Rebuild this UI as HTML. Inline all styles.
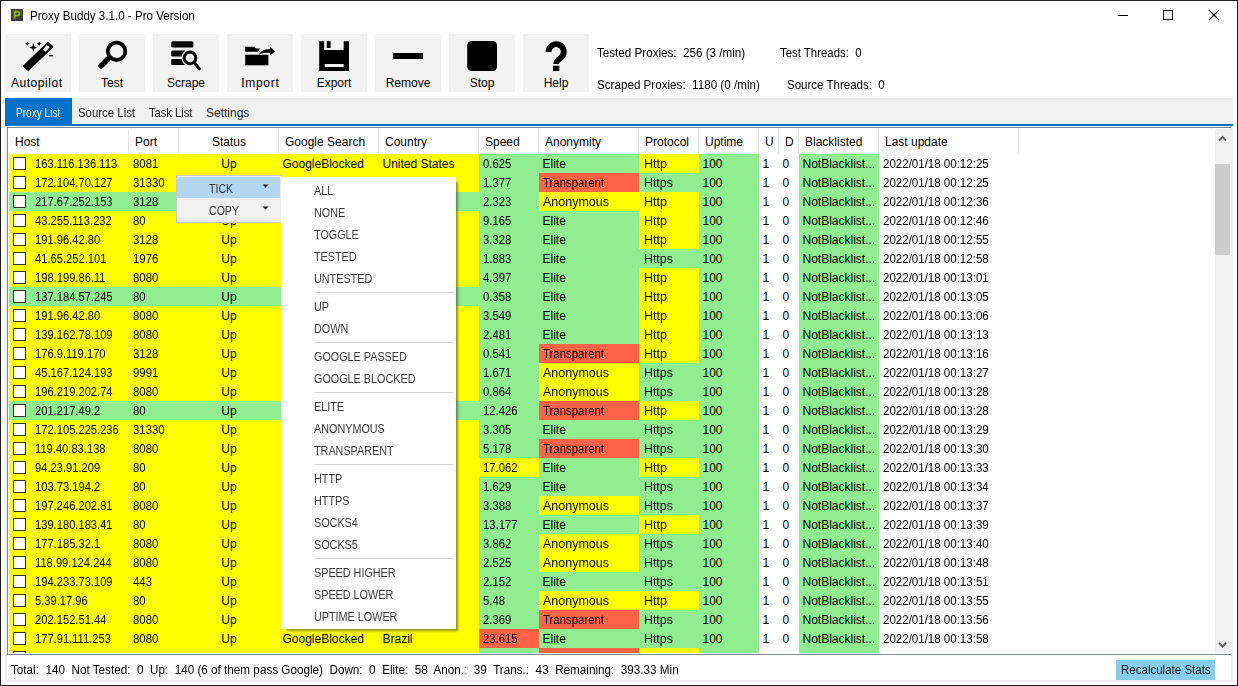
<!DOCTYPE html>
<html><head><meta charset="utf-8"><style>
*{margin:0;padding:0;box-sizing:border-box}
html,body{width:1238px;height:686px;overflow:hidden;background:#fff}
body{position:relative;font-family:"Liberation Sans",sans-serif;font-size:12px;color:#000}
.a{position:absolute}
.t{position:absolute;white-space:pre;line-height:1;transform-origin:0 0}
.c{position:absolute;height:19px;overflow:hidden}
.btn{position:absolute;top:34px;width:66px;height:58px;background:#f2f2f2}
.bl{position:absolute;left:0;width:66px;top:43px;text-align:center;font-size:12px;white-space:pre;line-height:1}
.hs{position:absolute;top:129px;width:1px;height:25px;background:#e5e5e5}
.ht{position:absolute;top:136px;white-space:pre;line-height:1}
.cb{position:absolute;left:13px;width:13px;height:13px;border:1px solid #333;background:#fff}
.mi{position:absolute;left:33px;white-space:pre;line-height:1;color:#3a3a3a;font-size:12px;transform:scaleX(0.9);transform-origin:0 0}
.ms{position:absolute;left:34px;width:139px;height:1px;background:#d7d7d7}
</style></head><body>

<div class="a" style="left:0;top:0;width:1238px;height:686px;border:1px solid #1f1f1f"></div>
<div class="a" style="left:11px;top:9px;width:12px;height:12px;background:#404040;border-radius:1px;box-shadow:0 0 1px #404040"></div>
<svg class="a" style="left:11px;top:9px" width="12" height="12"><path d="M3.7 9.8 V2.6 H6.3 Q8.5 2.6 8.5 4.6 Q8.5 6.6 6.3 6.6 H3.7" fill="none" stroke="#8fba0c" stroke-width="1.8"/></svg>
<div class="t" style="left:30px;top:10px;font-size:12px;transform:scaleX(0.965)">Proxy Buddy 3.1.0 - Pro Version</div>
<div class="a" style="left:1118px;top:15px;width:10px;height:1px;background:#000"></div>
<div class="a" style="left:1163px;top:10px;width:10px;height:10px;border:1px solid #000"></div>
<svg class="a" style="left:1208px;top:9px" width="12" height="12" viewBox="0 0 12 12"><path d="M1 1L11 11M11 1L1 11" stroke="#000" stroke-width="1.1"/></svg>
<div class="btn" style="left:5px"><svg class="a" style="left:0;top:0" width="66" height="58" viewBox="0 0 66 58"><path d="M43 8 L48.2 12.7 L23.2 36.8 L18.2 32.1 Z" fill="#000" stroke="#000" stroke-width="1" stroke-linejoin="round"/><path d="M38 15.6 L41.8 11 L44.8 13.5 L40.6 17.75 Z" fill="#f2f2f2"/><path d="M28.3 8.8 L29.3 12.4 L32.6 13.4 L29.3 14.4 L28.3 18.0 L27.3 14.4 L24.0 13.4 L27.3 12.4 Z" fill="#000"/><path d="M22.4 7.500000000000001 L23.2 9.0 L24.7 9.8 L23.2 10.600000000000001 L22.4 12.100000000000001 L21.599999999999998 10.600000000000001 L20.099999999999998 9.8 L21.599999999999998 9.0 Z" fill="#000"/><path d="M34.2 7.500000000000001 L35.0 9.0 L36.5 9.8 L35.0 10.600000000000001 L34.2 12.100000000000001 L33.400000000000006 10.600000000000001 L31.900000000000002 9.8 L33.400000000000006 9.0 Z" fill="#000"/><rect x="44" y="21" width="4.2" height="1.3" fill="#000"/></svg><div class="bl" style="letter-spacing:0.55px;text-indent:-2.5px">Autopilot</div></div>
<div class="btn" style="left:79px"><svg class="a" style="left:0;top:0" width="66" height="58" viewBox="0 0 66 58"><circle cx="37.6" cy="17.3" r="8.7" fill="none" stroke="#000" stroke-width="3.8"/><path d="M22 32 L29 25" stroke="#000" stroke-width="5.4" stroke-linecap="round"/></svg><div class="bl" style="">Test</div></div>
<div class="btn" style="left:153px"><svg class="a" style="left:0;top:0" width="66" height="58" viewBox="0 0 66 58"><rect x="18.2" y="7.2" width="22.2" height="6.3" rx="1.5" fill="#000"/><rect x="18.2" y="16.5" width="14" height="5.9" rx="1.2" fill="#000"/><rect x="18.2" y="24.9" width="14" height="6" rx="1.2" fill="#000"/><circle cx="37" cy="23.9" r="8.6" fill="#f2f2f2"/><circle cx="37" cy="23.9" r="5.8" fill="none" stroke="#000" stroke-width="3"/><path d="M41.5 28.8 L46.3 34.9" stroke="#000" stroke-width="3" stroke-linecap="round"/></svg><div class="bl" style="">Scrape</div></div>
<div class="btn" style="left:227px"><svg class="a" style="left:0;top:0" width="66" height="58" viewBox="0 0 66 58"><path d="M18.2 12.7 L27.5 12.7 L29 14.5 L33 14.5 L31 17.75 L18.2 17.75 Z" fill="#000"/><path d="M18.2 20.7 L41.4 20.7 L41.4 31.3 L18.2 31.3 Z" fill="#000"/><path d="M32 20.5 C34 16.5 38 15 43 15.3 L43 12.7 L48.2 17.3 L43 21.5 L43 19 C38 18.5 35 19 33 20.5 Z" fill="#000"/></svg><div class="bl" style="letter-spacing:0.7px;text-indent:0.7px">Import</div></div>
<div class="btn" style="left:301px"><svg class="a" style="left:0;top:0" width="66" height="58" viewBox="0 0 66 58"><path d="M18.2 7.2 H48 V37 H18.2 Z M23.2 7.2 V16.1 H42.7 V7.2 Z" fill="#000" fill-rule="evenodd"/><rect x="25.8" y="7.2" width="3.8" height="6.8" fill="#000"/><rect x="23.7" y="30" width="19" height="3" fill="#f2f2f2"/></svg><div class="bl" style="">Export</div></div>
<div class="btn" style="left:375px"><svg class="a" style="left:0;top:0" width="66" height="58" viewBox="0 0 66 58"><rect x="18.2" y="19" width="29.8" height="6" fill="#000"/></svg><div class="bl" style="">Remove</div></div>
<div class="btn" style="left:449px"><svg class="a" style="left:0;top:0" width="66" height="58" viewBox="0 0 66 58"><rect x="18.2" y="7" width="29.8" height="30" rx="4.5" fill="#000"/></svg><div class="bl" style="">Stop</div></div>
<div class="btn" style="left:523px"><svg class="a" style="left:0;top:0" width="66" height="58" viewBox="0 0 66 58"><path d="M25.6 18 A7.6 7.6 0 1 1 38.5 23.2 L35.2 26 Q33.2 27.5 33.2 29.5 L33.2 30" fill="none" stroke="#000" stroke-width="5.8"/><rect x="30" y="31.7" width="6.3" height="5.3" fill="#000"/></svg><div class="bl" style="">Help</div></div>
<div class="t" style="left:597px;top:47px;transform:scaleX(0.97)">Tested Proxies:  256 (3 /min)</div>
<div class="t" style="left:780px;top:47px;transform:scaleX(0.95)">Test Threads:  0</div>
<div class="t" style="left:597px;top:79px;transform:scaleX(0.97)">Scraped Proxies:  1180 (0 /min)</div>
<div class="t" style="left:787px;top:79px;transform:scaleX(0.96)">Source Threads:  0</div>
<div class="a" style="left:5px;top:98px;width:1228px;height:26px;background:#f0f0f0"></div>
<div class="a" style="left:5px;top:124px;width:1228px;height:2px;background:#0072c9"></div>
<div class="a" style="left:5px;top:98px;width:67px;height:28px;background:#0072c9"></div>
<div class="t" style="left:16px;top:107px;color:#fff;transform:scaleX(0.84)">Proxy List</div>
<div class="t" style="left:78px;top:107px;color:#222;transform:scaleX(0.95)">Source List</div>
<div class="t" style="left:149px;top:107px;color:#222;transform:scaleX(0.93)">Task List</div>
<div class="t" style="left:206px;top:107px;color:#222">Settings</div>
<div class="a" style="left:5px;top:126px;width:1228px;height:556px;border:2px solid #f0f0f0;border-top:none"></div>
<div class="a" style="left:7px;top:127px;width:1225px;height:528px;border:1px solid #828790;border-right:none;clip-path:inset(0 1px 0 0);background:#fff"></div>
<div class="ht" style="left:15px">Host</div>
<div class="hs" style="left:128px"></div>
<div class="ht" style="left:135px">Port</div>
<div class="hs" style="left:178px"></div>
<div class="ht" style="left:179px;width:100px;text-align:center">Status</div>
<div class="hs" style="left:278px"></div>
<div class="ht" style="left:285px">Google Search</div>
<div class="hs" style="left:378px"></div>
<div class="ht" style="left:385px">Country</div>
<div class="hs" style="left:478px"></div>
<div class="ht" style="left:485px">Speed</div>
<div class="hs" style="left:538px"></div>
<div class="ht" style="left:545px">Anonymity</div>
<div class="hs" style="left:638px"></div>
<div class="ht" style="left:645px">Protocol</div>
<div class="hs" style="left:698px"></div>
<div class="ht" style="left:705px">Uptime</div>
<div class="hs" style="left:758px"></div>
<div class="ht" style="left:765px">U</div>
<div class="hs" style="left:778px"></div>
<div class="ht" style="left:785px">D</div>
<div class="hs" style="left:798px"></div>
<div class="ht" style="left:805px">Blacklisted</div>
<div class="hs" style="left:878px"></div>
<div class="ht" style="left:885px">Last update</div>
<div class="hs" style="left:1018px"></div>
<div class="a" style="left:8px;top:154px;width:1207px;height:499px;overflow:hidden">
<div class="c" style="left:1px;top:0px;width:120px;background:#ffff00"></div>
<div class="c" style="left:121px;top:0px;width:50px;background:#ffff00"></div>
<div class="c" style="left:171px;top:0px;width:100px;background:#ffff00"></div>
<div class="c" style="left:271px;top:0px;width:100px;background:#ffff00"></div>
<div class="c" style="left:371px;top:0px;width:100px;background:#ffff00"></div>
<div class="c" style="left:471px;top:0px;width:60px;background:#90ee90"></div>
<div class="c" style="left:531px;top:0px;width:100px;background:#90ee90"></div>
<div class="c" style="left:631px;top:0px;width:60px;background:#ffff00"></div>
<div class="c" style="left:691px;top:0px;width:60px;background:#90ee90"></div>
<div class="c" style="left:751px;top:0px;width:20px;background:#ffffff"></div>
<div class="c" style="left:771px;top:0px;width:20px;background:#ffffff"></div>
<div class="c" style="left:791px;top:0px;width:80px;background:#90ee90"></div>
<div class="c" style="left:871px;top:0px;width:140px;background:#ffffff"></div>
<div class="cb" style="left:5px;top:3px"></div>
<div class="t" style="left:27px;top:4px;transform:scaleX(0.93)">163.116.136.113</div>
<div class="t" style="left:124.5px;top:4px;transform:scaleX(0.95)">8081</div>
<div class="t" style="left:171px;width:100px;text-align:center;top:4px">Up</div>
<div class="t" style="left:274.5px;top:4px">GoogleBlocked</div>
<div class="t" style="left:374.5px;top:4px">United States</div>
<div class="t" style="left:474.5px;top:4px;transform:scaleX(0.94)">0.625</div>
<div class="t" style="left:534.5px;top:4px">Elite</div>
<div class="t" style="left:635.5px;top:4px;transform:scaleX(1.05)">Http</div>
<div class="t" style="left:694.5px;top:4px">100</div>
<div class="t" style="left:754.5px;top:4px">1</div>
<div class="t" style="left:774.5px;top:4px">0</div>
<div class="t" style="left:794.5px;top:4px">NotBlacklist...</div>
<div class="t" style="left:874.5px;top:4px;transform:scaleX(0.96)">2022/01/18 00:12:25</div>
<div class="c" style="left:1px;top:19px;width:120px;background:#ffff00"></div>
<div class="c" style="left:121px;top:19px;width:50px;background:#ffff00"></div>
<div class="c" style="left:171px;top:19px;width:100px;background:#ffff00"></div>
<div class="c" style="left:271px;top:19px;width:100px;background:#ffff00"></div>
<div class="c" style="left:371px;top:19px;width:100px;background:#ffff00"></div>
<div class="c" style="left:471px;top:19px;width:60px;background:#90ee90"></div>
<div class="c" style="left:531px;top:19px;width:100px;background:#ff6347"></div>
<div class="c" style="left:631px;top:19px;width:60px;background:#90ee90"></div>
<div class="c" style="left:691px;top:19px;width:60px;background:#90ee90"></div>
<div class="c" style="left:751px;top:19px;width:20px;background:#ffffff"></div>
<div class="c" style="left:771px;top:19px;width:20px;background:#ffffff"></div>
<div class="c" style="left:791px;top:19px;width:80px;background:#90ee90"></div>
<div class="c" style="left:871px;top:19px;width:140px;background:#ffffff"></div>
<div class="cb" style="left:5px;top:22px"></div>
<div class="t" style="left:27px;top:23px;transform:scaleX(0.93)">172.104.70.127</div>
<div class="t" style="left:124.5px;top:23px;transform:scaleX(0.95)">31330</div>
<div class="t" style="left:171px;width:100px;text-align:center;top:23px">Up</div>
<div class="t" style="left:274.5px;top:23px">GoogleBlocked</div>
<div class="t" style="left:374.5px;top:23px">United States</div>
<div class="t" style="left:474.5px;top:23px;transform:scaleX(0.94)">1.377</div>
<div class="t" style="left:534.5px;top:23px;transform:scaleX(0.95)">Transparent</div>
<div class="t" style="left:635.5px;top:23px;transform:scaleX(1.03)">Https</div>
<div class="t" style="left:694.5px;top:23px">100</div>
<div class="t" style="left:754.5px;top:23px">1</div>
<div class="t" style="left:774.5px;top:23px">0</div>
<div class="t" style="left:794.5px;top:23px">NotBlacklist...</div>
<div class="t" style="left:874.5px;top:23px;transform:scaleX(0.96)">2022/01/18 00:12:25</div>
<div class="c" style="left:1px;top:38px;width:120px;background:#90ee90"></div>
<div class="c" style="left:121px;top:38px;width:50px;background:#90ee90"></div>
<div class="c" style="left:171px;top:38px;width:100px;background:#90ee90"></div>
<div class="c" style="left:271px;top:38px;width:100px;background:#90ee90"></div>
<div class="c" style="left:371px;top:38px;width:100px;background:#90ee90"></div>
<div class="c" style="left:471px;top:38px;width:60px;background:#90ee90"></div>
<div class="c" style="left:531px;top:38px;width:100px;background:#ffff00"></div>
<div class="c" style="left:631px;top:38px;width:60px;background:#ffff00"></div>
<div class="c" style="left:691px;top:38px;width:60px;background:#90ee90"></div>
<div class="c" style="left:751px;top:38px;width:20px;background:#ffffff"></div>
<div class="c" style="left:771px;top:38px;width:20px;background:#ffffff"></div>
<div class="c" style="left:791px;top:38px;width:80px;background:#90ee90"></div>
<div class="c" style="left:871px;top:38px;width:140px;background:#ffffff"></div>
<div class="cb" style="left:5px;top:41px"></div>
<div class="t" style="left:27px;top:42px;transform:scaleX(0.93)">217.67.252.153</div>
<div class="t" style="left:124.5px;top:42px;transform:scaleX(0.95)">3128</div>
<div class="t" style="left:171px;width:100px;text-align:center;top:42px">Up</div>
<div class="t" style="left:274.5px;top:42px">GooglePassed</div>
<div class="t" style="left:374.5px;top:42px">Germany</div>
<div class="t" style="left:474.5px;top:42px;transform:scaleX(0.94)">2.323</div>
<div class="t" style="left:534.5px;top:42px;transform:scaleX(1.04)">Anonymous</div>
<div class="t" style="left:635.5px;top:42px;transform:scaleX(1.05)">Http</div>
<div class="t" style="left:694.5px;top:42px">100</div>
<div class="t" style="left:754.5px;top:42px">1</div>
<div class="t" style="left:774.5px;top:42px">0</div>
<div class="t" style="left:794.5px;top:42px">NotBlacklist...</div>
<div class="t" style="left:874.5px;top:42px;transform:scaleX(0.96)">2022/01/18 00:12:36</div>
<div class="c" style="left:1px;top:57px;width:120px;background:#ffff00"></div>
<div class="c" style="left:121px;top:57px;width:50px;background:#ffff00"></div>
<div class="c" style="left:171px;top:57px;width:100px;background:#ffff00"></div>
<div class="c" style="left:271px;top:57px;width:100px;background:#ffff00"></div>
<div class="c" style="left:371px;top:57px;width:100px;background:#ffff00"></div>
<div class="c" style="left:471px;top:57px;width:60px;background:#90ee90"></div>
<div class="c" style="left:531px;top:57px;width:100px;background:#90ee90"></div>
<div class="c" style="left:631px;top:57px;width:60px;background:#ffff00"></div>
<div class="c" style="left:691px;top:57px;width:60px;background:#90ee90"></div>
<div class="c" style="left:751px;top:57px;width:20px;background:#ffffff"></div>
<div class="c" style="left:771px;top:57px;width:20px;background:#ffffff"></div>
<div class="c" style="left:791px;top:57px;width:80px;background:#90ee90"></div>
<div class="c" style="left:871px;top:57px;width:140px;background:#ffffff"></div>
<div class="cb" style="left:5px;top:60px"></div>
<div class="t" style="left:27px;top:61px;transform:scaleX(0.93)">43.255.113.232</div>
<div class="t" style="left:124.5px;top:61px;transform:scaleX(0.95)">80</div>
<div class="t" style="left:171px;width:100px;text-align:center;top:61px">Up</div>
<div class="t" style="left:274.5px;top:61px">GoogleBlocked</div>
<div class="t" style="left:374.5px;top:61px">India</div>
<div class="t" style="left:474.5px;top:61px;transform:scaleX(0.94)">9.165</div>
<div class="t" style="left:534.5px;top:61px">Elite</div>
<div class="t" style="left:635.5px;top:61px;transform:scaleX(1.05)">Http</div>
<div class="t" style="left:694.5px;top:61px">100</div>
<div class="t" style="left:754.5px;top:61px">1</div>
<div class="t" style="left:774.5px;top:61px">0</div>
<div class="t" style="left:794.5px;top:61px">NotBlacklist...</div>
<div class="t" style="left:874.5px;top:61px;transform:scaleX(0.96)">2022/01/18 00:12:46</div>
<div class="c" style="left:1px;top:76px;width:120px;background:#ffff00"></div>
<div class="c" style="left:121px;top:76px;width:50px;background:#ffff00"></div>
<div class="c" style="left:171px;top:76px;width:100px;background:#ffff00"></div>
<div class="c" style="left:271px;top:76px;width:100px;background:#ffff00"></div>
<div class="c" style="left:371px;top:76px;width:100px;background:#ffff00"></div>
<div class="c" style="left:471px;top:76px;width:60px;background:#90ee90"></div>
<div class="c" style="left:531px;top:76px;width:100px;background:#90ee90"></div>
<div class="c" style="left:631px;top:76px;width:60px;background:#ffff00"></div>
<div class="c" style="left:691px;top:76px;width:60px;background:#90ee90"></div>
<div class="c" style="left:751px;top:76px;width:20px;background:#ffffff"></div>
<div class="c" style="left:771px;top:76px;width:20px;background:#ffffff"></div>
<div class="c" style="left:791px;top:76px;width:80px;background:#90ee90"></div>
<div class="c" style="left:871px;top:76px;width:140px;background:#ffffff"></div>
<div class="cb" style="left:5px;top:79px"></div>
<div class="t" style="left:27px;top:80px;transform:scaleX(0.93)">191.96.42.80</div>
<div class="t" style="left:124.5px;top:80px;transform:scaleX(0.95)">3128</div>
<div class="t" style="left:171px;width:100px;text-align:center;top:80px">Up</div>
<div class="t" style="left:274.5px;top:80px">GoogleBlocked</div>
<div class="t" style="left:374.5px;top:80px">United States</div>
<div class="t" style="left:474.5px;top:80px;transform:scaleX(0.94)">3.328</div>
<div class="t" style="left:534.5px;top:80px">Elite</div>
<div class="t" style="left:635.5px;top:80px;transform:scaleX(1.05)">Http</div>
<div class="t" style="left:694.5px;top:80px">100</div>
<div class="t" style="left:754.5px;top:80px">1</div>
<div class="t" style="left:774.5px;top:80px">0</div>
<div class="t" style="left:794.5px;top:80px">NotBlacklist...</div>
<div class="t" style="left:874.5px;top:80px;transform:scaleX(0.96)">2022/01/18 00:12:55</div>
<div class="c" style="left:1px;top:95px;width:120px;background:#ffff00"></div>
<div class="c" style="left:121px;top:95px;width:50px;background:#ffff00"></div>
<div class="c" style="left:171px;top:95px;width:100px;background:#ffff00"></div>
<div class="c" style="left:271px;top:95px;width:100px;background:#ffff00"></div>
<div class="c" style="left:371px;top:95px;width:100px;background:#ffff00"></div>
<div class="c" style="left:471px;top:95px;width:60px;background:#90ee90"></div>
<div class="c" style="left:531px;top:95px;width:100px;background:#90ee90"></div>
<div class="c" style="left:631px;top:95px;width:60px;background:#90ee90"></div>
<div class="c" style="left:691px;top:95px;width:60px;background:#90ee90"></div>
<div class="c" style="left:751px;top:95px;width:20px;background:#ffffff"></div>
<div class="c" style="left:771px;top:95px;width:20px;background:#ffffff"></div>
<div class="c" style="left:791px;top:95px;width:80px;background:#90ee90"></div>
<div class="c" style="left:871px;top:95px;width:140px;background:#ffffff"></div>
<div class="cb" style="left:5px;top:98px"></div>
<div class="t" style="left:27px;top:99px;transform:scaleX(0.93)">41.65.252.101</div>
<div class="t" style="left:124.5px;top:99px;transform:scaleX(0.95)">1976</div>
<div class="t" style="left:171px;width:100px;text-align:center;top:99px">Up</div>
<div class="t" style="left:274.5px;top:99px">GoogleBlocked</div>
<div class="t" style="left:374.5px;top:99px">Egypt</div>
<div class="t" style="left:474.5px;top:99px;transform:scaleX(0.94)">1.883</div>
<div class="t" style="left:534.5px;top:99px">Elite</div>
<div class="t" style="left:635.5px;top:99px;transform:scaleX(1.03)">Https</div>
<div class="t" style="left:694.5px;top:99px">100</div>
<div class="t" style="left:754.5px;top:99px">1</div>
<div class="t" style="left:774.5px;top:99px">0</div>
<div class="t" style="left:794.5px;top:99px">NotBlacklist...</div>
<div class="t" style="left:874.5px;top:99px;transform:scaleX(0.96)">2022/01/18 00:12:58</div>
<div class="c" style="left:1px;top:114px;width:120px;background:#ffff00"></div>
<div class="c" style="left:121px;top:114px;width:50px;background:#ffff00"></div>
<div class="c" style="left:171px;top:114px;width:100px;background:#ffff00"></div>
<div class="c" style="left:271px;top:114px;width:100px;background:#ffff00"></div>
<div class="c" style="left:371px;top:114px;width:100px;background:#ffff00"></div>
<div class="c" style="left:471px;top:114px;width:60px;background:#90ee90"></div>
<div class="c" style="left:531px;top:114px;width:100px;background:#90ee90"></div>
<div class="c" style="left:631px;top:114px;width:60px;background:#ffff00"></div>
<div class="c" style="left:691px;top:114px;width:60px;background:#90ee90"></div>
<div class="c" style="left:751px;top:114px;width:20px;background:#ffffff"></div>
<div class="c" style="left:771px;top:114px;width:20px;background:#ffffff"></div>
<div class="c" style="left:791px;top:114px;width:80px;background:#90ee90"></div>
<div class="c" style="left:871px;top:114px;width:140px;background:#ffffff"></div>
<div class="cb" style="left:5px;top:117px"></div>
<div class="t" style="left:27px;top:118px;transform:scaleX(0.93)">198.199.86.11</div>
<div class="t" style="left:124.5px;top:118px;transform:scaleX(0.95)">8080</div>
<div class="t" style="left:171px;width:100px;text-align:center;top:118px">Up</div>
<div class="t" style="left:274.5px;top:118px">GoogleBlocked</div>
<div class="t" style="left:374.5px;top:118px">United States</div>
<div class="t" style="left:474.5px;top:118px;transform:scaleX(0.94)">4.397</div>
<div class="t" style="left:534.5px;top:118px">Elite</div>
<div class="t" style="left:635.5px;top:118px;transform:scaleX(1.05)">Http</div>
<div class="t" style="left:694.5px;top:118px">100</div>
<div class="t" style="left:754.5px;top:118px">1</div>
<div class="t" style="left:774.5px;top:118px">0</div>
<div class="t" style="left:794.5px;top:118px">NotBlacklist...</div>
<div class="t" style="left:874.5px;top:118px;transform:scaleX(0.96)">2022/01/18 00:13:01</div>
<div class="c" style="left:1px;top:133px;width:120px;background:#90ee90"></div>
<div class="c" style="left:121px;top:133px;width:50px;background:#90ee90"></div>
<div class="c" style="left:171px;top:133px;width:100px;background:#90ee90"></div>
<div class="c" style="left:271px;top:133px;width:100px;background:#90ee90"></div>
<div class="c" style="left:371px;top:133px;width:100px;background:#90ee90"></div>
<div class="c" style="left:471px;top:133px;width:60px;background:#90ee90"></div>
<div class="c" style="left:531px;top:133px;width:100px;background:#90ee90"></div>
<div class="c" style="left:631px;top:133px;width:60px;background:#ffff00"></div>
<div class="c" style="left:691px;top:133px;width:60px;background:#90ee90"></div>
<div class="c" style="left:751px;top:133px;width:20px;background:#ffffff"></div>
<div class="c" style="left:771px;top:133px;width:20px;background:#ffffff"></div>
<div class="c" style="left:791px;top:133px;width:80px;background:#90ee90"></div>
<div class="c" style="left:871px;top:133px;width:140px;background:#ffffff"></div>
<div class="cb" style="left:5px;top:136px"></div>
<div class="t" style="left:27px;top:137px;transform:scaleX(0.93)">137.184.57.245</div>
<div class="t" style="left:124.5px;top:137px;transform:scaleX(0.95)">80</div>
<div class="t" style="left:171px;width:100px;text-align:center;top:137px">Up</div>
<div class="t" style="left:274.5px;top:137px">GooglePassed</div>
<div class="t" style="left:374.5px;top:137px">United States</div>
<div class="t" style="left:474.5px;top:137px;transform:scaleX(0.94)">0.358</div>
<div class="t" style="left:534.5px;top:137px">Elite</div>
<div class="t" style="left:635.5px;top:137px;transform:scaleX(1.05)">Http</div>
<div class="t" style="left:694.5px;top:137px">100</div>
<div class="t" style="left:754.5px;top:137px">1</div>
<div class="t" style="left:774.5px;top:137px">0</div>
<div class="t" style="left:794.5px;top:137px">NotBlacklist...</div>
<div class="t" style="left:874.5px;top:137px;transform:scaleX(0.96)">2022/01/18 00:13:05</div>
<div class="c" style="left:1px;top:152px;width:120px;background:#ffff00"></div>
<div class="c" style="left:121px;top:152px;width:50px;background:#ffff00"></div>
<div class="c" style="left:171px;top:152px;width:100px;background:#ffff00"></div>
<div class="c" style="left:271px;top:152px;width:100px;background:#ffff00"></div>
<div class="c" style="left:371px;top:152px;width:100px;background:#ffff00"></div>
<div class="c" style="left:471px;top:152px;width:60px;background:#90ee90"></div>
<div class="c" style="left:531px;top:152px;width:100px;background:#90ee90"></div>
<div class="c" style="left:631px;top:152px;width:60px;background:#ffff00"></div>
<div class="c" style="left:691px;top:152px;width:60px;background:#90ee90"></div>
<div class="c" style="left:751px;top:152px;width:20px;background:#ffffff"></div>
<div class="c" style="left:771px;top:152px;width:20px;background:#ffffff"></div>
<div class="c" style="left:791px;top:152px;width:80px;background:#90ee90"></div>
<div class="c" style="left:871px;top:152px;width:140px;background:#ffffff"></div>
<div class="cb" style="left:5px;top:155px"></div>
<div class="t" style="left:27px;top:156px;transform:scaleX(0.93)">191.96.42.80</div>
<div class="t" style="left:124.5px;top:156px;transform:scaleX(0.95)">8080</div>
<div class="t" style="left:171px;width:100px;text-align:center;top:156px">Up</div>
<div class="t" style="left:274.5px;top:156px">GoogleBlocked</div>
<div class="t" style="left:374.5px;top:156px">United States</div>
<div class="t" style="left:474.5px;top:156px;transform:scaleX(0.94)">3.549</div>
<div class="t" style="left:534.5px;top:156px">Elite</div>
<div class="t" style="left:635.5px;top:156px;transform:scaleX(1.05)">Http</div>
<div class="t" style="left:694.5px;top:156px">100</div>
<div class="t" style="left:754.5px;top:156px">1</div>
<div class="t" style="left:774.5px;top:156px">0</div>
<div class="t" style="left:794.5px;top:156px">NotBlacklist...</div>
<div class="t" style="left:874.5px;top:156px;transform:scaleX(0.96)">2022/01/18 00:13:06</div>
<div class="c" style="left:1px;top:171px;width:120px;background:#ffff00"></div>
<div class="c" style="left:121px;top:171px;width:50px;background:#ffff00"></div>
<div class="c" style="left:171px;top:171px;width:100px;background:#ffff00"></div>
<div class="c" style="left:271px;top:171px;width:100px;background:#ffff00"></div>
<div class="c" style="left:371px;top:171px;width:100px;background:#ffff00"></div>
<div class="c" style="left:471px;top:171px;width:60px;background:#90ee90"></div>
<div class="c" style="left:531px;top:171px;width:100px;background:#90ee90"></div>
<div class="c" style="left:631px;top:171px;width:60px;background:#ffff00"></div>
<div class="c" style="left:691px;top:171px;width:60px;background:#90ee90"></div>
<div class="c" style="left:751px;top:171px;width:20px;background:#ffffff"></div>
<div class="c" style="left:771px;top:171px;width:20px;background:#ffffff"></div>
<div class="c" style="left:791px;top:171px;width:80px;background:#90ee90"></div>
<div class="c" style="left:871px;top:171px;width:140px;background:#ffffff"></div>
<div class="cb" style="left:5px;top:174px"></div>
<div class="t" style="left:27px;top:175px;transform:scaleX(0.93)">139.162.78.109</div>
<div class="t" style="left:124.5px;top:175px;transform:scaleX(0.95)">8080</div>
<div class="t" style="left:171px;width:100px;text-align:center;top:175px">Up</div>
<div class="t" style="left:274.5px;top:175px">GoogleBlocked</div>
<div class="t" style="left:374.5px;top:175px">Japan</div>
<div class="t" style="left:474.5px;top:175px;transform:scaleX(0.94)">2.481</div>
<div class="t" style="left:534.5px;top:175px">Elite</div>
<div class="t" style="left:635.5px;top:175px;transform:scaleX(1.05)">Http</div>
<div class="t" style="left:694.5px;top:175px">100</div>
<div class="t" style="left:754.5px;top:175px">1</div>
<div class="t" style="left:774.5px;top:175px">0</div>
<div class="t" style="left:794.5px;top:175px">NotBlacklist...</div>
<div class="t" style="left:874.5px;top:175px;transform:scaleX(0.96)">2022/01/18 00:13:13</div>
<div class="c" style="left:1px;top:190px;width:120px;background:#ffff00"></div>
<div class="c" style="left:121px;top:190px;width:50px;background:#ffff00"></div>
<div class="c" style="left:171px;top:190px;width:100px;background:#ffff00"></div>
<div class="c" style="left:271px;top:190px;width:100px;background:#ffff00"></div>
<div class="c" style="left:371px;top:190px;width:100px;background:#ffff00"></div>
<div class="c" style="left:471px;top:190px;width:60px;background:#90ee90"></div>
<div class="c" style="left:531px;top:190px;width:100px;background:#ff6347"></div>
<div class="c" style="left:631px;top:190px;width:60px;background:#ffff00"></div>
<div class="c" style="left:691px;top:190px;width:60px;background:#90ee90"></div>
<div class="c" style="left:751px;top:190px;width:20px;background:#ffffff"></div>
<div class="c" style="left:771px;top:190px;width:20px;background:#ffffff"></div>
<div class="c" style="left:791px;top:190px;width:80px;background:#90ee90"></div>
<div class="c" style="left:871px;top:190px;width:140px;background:#ffffff"></div>
<div class="cb" style="left:5px;top:193px"></div>
<div class="t" style="left:27px;top:194px;transform:scaleX(0.93)">176.9.119.170</div>
<div class="t" style="left:124.5px;top:194px;transform:scaleX(0.95)">3128</div>
<div class="t" style="left:171px;width:100px;text-align:center;top:194px">Up</div>
<div class="t" style="left:274.5px;top:194px">GoogleBlocked</div>
<div class="t" style="left:374.5px;top:194px">Germany</div>
<div class="t" style="left:474.5px;top:194px;transform:scaleX(0.94)">0.541</div>
<div class="t" style="left:534.5px;top:194px;transform:scaleX(0.95)">Transparent</div>
<div class="t" style="left:635.5px;top:194px;transform:scaleX(1.05)">Http</div>
<div class="t" style="left:694.5px;top:194px">100</div>
<div class="t" style="left:754.5px;top:194px">1</div>
<div class="t" style="left:774.5px;top:194px">0</div>
<div class="t" style="left:794.5px;top:194px">NotBlacklist...</div>
<div class="t" style="left:874.5px;top:194px;transform:scaleX(0.96)">2022/01/18 00:13:16</div>
<div class="c" style="left:1px;top:209px;width:120px;background:#ffff00"></div>
<div class="c" style="left:121px;top:209px;width:50px;background:#ffff00"></div>
<div class="c" style="left:171px;top:209px;width:100px;background:#ffff00"></div>
<div class="c" style="left:271px;top:209px;width:100px;background:#ffff00"></div>
<div class="c" style="left:371px;top:209px;width:100px;background:#ffff00"></div>
<div class="c" style="left:471px;top:209px;width:60px;background:#90ee90"></div>
<div class="c" style="left:531px;top:209px;width:100px;background:#ffff00"></div>
<div class="c" style="left:631px;top:209px;width:60px;background:#90ee90"></div>
<div class="c" style="left:691px;top:209px;width:60px;background:#90ee90"></div>
<div class="c" style="left:751px;top:209px;width:20px;background:#ffffff"></div>
<div class="c" style="left:771px;top:209px;width:20px;background:#ffffff"></div>
<div class="c" style="left:791px;top:209px;width:80px;background:#90ee90"></div>
<div class="c" style="left:871px;top:209px;width:140px;background:#ffffff"></div>
<div class="cb" style="left:5px;top:212px"></div>
<div class="t" style="left:27px;top:213px;transform:scaleX(0.93)">45.167.124.193</div>
<div class="t" style="left:124.5px;top:213px;transform:scaleX(0.95)">9991</div>
<div class="t" style="left:171px;width:100px;text-align:center;top:213px">Up</div>
<div class="t" style="left:274.5px;top:213px">GoogleBlocked</div>
<div class="t" style="left:374.5px;top:213px">Brazil</div>
<div class="t" style="left:474.5px;top:213px;transform:scaleX(0.94)">1.671</div>
<div class="t" style="left:534.5px;top:213px;transform:scaleX(1.04)">Anonymous</div>
<div class="t" style="left:635.5px;top:213px;transform:scaleX(1.03)">Https</div>
<div class="t" style="left:694.5px;top:213px">100</div>
<div class="t" style="left:754.5px;top:213px">1</div>
<div class="t" style="left:774.5px;top:213px">0</div>
<div class="t" style="left:794.5px;top:213px">NotBlacklist...</div>
<div class="t" style="left:874.5px;top:213px;transform:scaleX(0.96)">2022/01/18 00:13:27</div>
<div class="c" style="left:1px;top:228px;width:120px;background:#ffff00"></div>
<div class="c" style="left:121px;top:228px;width:50px;background:#ffff00"></div>
<div class="c" style="left:171px;top:228px;width:100px;background:#ffff00"></div>
<div class="c" style="left:271px;top:228px;width:100px;background:#ffff00"></div>
<div class="c" style="left:371px;top:228px;width:100px;background:#ffff00"></div>
<div class="c" style="left:471px;top:228px;width:60px;background:#90ee90"></div>
<div class="c" style="left:531px;top:228px;width:100px;background:#ffff00"></div>
<div class="c" style="left:631px;top:228px;width:60px;background:#90ee90"></div>
<div class="c" style="left:691px;top:228px;width:60px;background:#90ee90"></div>
<div class="c" style="left:751px;top:228px;width:20px;background:#ffffff"></div>
<div class="c" style="left:771px;top:228px;width:20px;background:#ffffff"></div>
<div class="c" style="left:791px;top:228px;width:80px;background:#90ee90"></div>
<div class="c" style="left:871px;top:228px;width:140px;background:#ffffff"></div>
<div class="cb" style="left:5px;top:231px"></div>
<div class="t" style="left:27px;top:232px;transform:scaleX(0.93)">196.219.202.74</div>
<div class="t" style="left:124.5px;top:232px;transform:scaleX(0.95)">8080</div>
<div class="t" style="left:171px;width:100px;text-align:center;top:232px">Up</div>
<div class="t" style="left:274.5px;top:232px">GoogleBlocked</div>
<div class="t" style="left:374.5px;top:232px">Egypt</div>
<div class="t" style="left:474.5px;top:232px;transform:scaleX(0.94)">0.864</div>
<div class="t" style="left:534.5px;top:232px;transform:scaleX(1.04)">Anonymous</div>
<div class="t" style="left:635.5px;top:232px;transform:scaleX(1.03)">Https</div>
<div class="t" style="left:694.5px;top:232px">100</div>
<div class="t" style="left:754.5px;top:232px">1</div>
<div class="t" style="left:774.5px;top:232px">0</div>
<div class="t" style="left:794.5px;top:232px">NotBlacklist...</div>
<div class="t" style="left:874.5px;top:232px;transform:scaleX(0.96)">2022/01/18 00:13:28</div>
<div class="c" style="left:1px;top:247px;width:120px;background:#90ee90"></div>
<div class="c" style="left:121px;top:247px;width:50px;background:#90ee90"></div>
<div class="c" style="left:171px;top:247px;width:100px;background:#90ee90"></div>
<div class="c" style="left:271px;top:247px;width:100px;background:#90ee90"></div>
<div class="c" style="left:371px;top:247px;width:100px;background:#90ee90"></div>
<div class="c" style="left:471px;top:247px;width:60px;background:#90ee90"></div>
<div class="c" style="left:531px;top:247px;width:100px;background:#ff6347"></div>
<div class="c" style="left:631px;top:247px;width:60px;background:#ffff00"></div>
<div class="c" style="left:691px;top:247px;width:60px;background:#90ee90"></div>
<div class="c" style="left:751px;top:247px;width:20px;background:#ffffff"></div>
<div class="c" style="left:771px;top:247px;width:20px;background:#ffffff"></div>
<div class="c" style="left:791px;top:247px;width:80px;background:#90ee90"></div>
<div class="c" style="left:871px;top:247px;width:140px;background:#ffffff"></div>
<div class="cb" style="left:5px;top:250px"></div>
<div class="t" style="left:27px;top:251px;transform:scaleX(0.93)">201.217.49.2</div>
<div class="t" style="left:124.5px;top:251px;transform:scaleX(0.95)">80</div>
<div class="t" style="left:171px;width:100px;text-align:center;top:251px">Up</div>
<div class="t" style="left:274.5px;top:251px">GooglePassed</div>
<div class="t" style="left:374.5px;top:251px">Paraguay</div>
<div class="t" style="left:474.5px;top:251px;transform:scaleX(0.94)">12.426</div>
<div class="t" style="left:534.5px;top:251px;transform:scaleX(0.95)">Transparent</div>
<div class="t" style="left:635.5px;top:251px;transform:scaleX(1.05)">Http</div>
<div class="t" style="left:694.5px;top:251px">100</div>
<div class="t" style="left:754.5px;top:251px">1</div>
<div class="t" style="left:774.5px;top:251px">0</div>
<div class="t" style="left:794.5px;top:251px">NotBlacklist...</div>
<div class="t" style="left:874.5px;top:251px;transform:scaleX(0.96)">2022/01/18 00:13:28</div>
<div class="c" style="left:1px;top:266px;width:120px;background:#ffff00"></div>
<div class="c" style="left:121px;top:266px;width:50px;background:#ffff00"></div>
<div class="c" style="left:171px;top:266px;width:100px;background:#ffff00"></div>
<div class="c" style="left:271px;top:266px;width:100px;background:#ffff00"></div>
<div class="c" style="left:371px;top:266px;width:100px;background:#ffff00"></div>
<div class="c" style="left:471px;top:266px;width:60px;background:#90ee90"></div>
<div class="c" style="left:531px;top:266px;width:100px;background:#90ee90"></div>
<div class="c" style="left:631px;top:266px;width:60px;background:#90ee90"></div>
<div class="c" style="left:691px;top:266px;width:60px;background:#90ee90"></div>
<div class="c" style="left:751px;top:266px;width:20px;background:#ffffff"></div>
<div class="c" style="left:771px;top:266px;width:20px;background:#ffffff"></div>
<div class="c" style="left:791px;top:266px;width:80px;background:#90ee90"></div>
<div class="c" style="left:871px;top:266px;width:140px;background:#ffffff"></div>
<div class="cb" style="left:5px;top:269px"></div>
<div class="t" style="left:27px;top:270px;transform:scaleX(0.93)">172.105.225.236</div>
<div class="t" style="left:124.5px;top:270px;transform:scaleX(0.95)">31330</div>
<div class="t" style="left:171px;width:100px;text-align:center;top:270px">Up</div>
<div class="t" style="left:274.5px;top:270px">GoogleBlocked</div>
<div class="t" style="left:374.5px;top:270px">United States</div>
<div class="t" style="left:474.5px;top:270px;transform:scaleX(0.94)">3.305</div>
<div class="t" style="left:534.5px;top:270px">Elite</div>
<div class="t" style="left:635.5px;top:270px;transform:scaleX(1.03)">Https</div>
<div class="t" style="left:694.5px;top:270px">100</div>
<div class="t" style="left:754.5px;top:270px">1</div>
<div class="t" style="left:774.5px;top:270px">0</div>
<div class="t" style="left:794.5px;top:270px">NotBlacklist...</div>
<div class="t" style="left:874.5px;top:270px;transform:scaleX(0.96)">2022/01/18 00:13:29</div>
<div class="c" style="left:1px;top:285px;width:120px;background:#ffff00"></div>
<div class="c" style="left:121px;top:285px;width:50px;background:#ffff00"></div>
<div class="c" style="left:171px;top:285px;width:100px;background:#ffff00"></div>
<div class="c" style="left:271px;top:285px;width:100px;background:#ffff00"></div>
<div class="c" style="left:371px;top:285px;width:100px;background:#ffff00"></div>
<div class="c" style="left:471px;top:285px;width:60px;background:#90ee90"></div>
<div class="c" style="left:531px;top:285px;width:100px;background:#ff6347"></div>
<div class="c" style="left:631px;top:285px;width:60px;background:#90ee90"></div>
<div class="c" style="left:691px;top:285px;width:60px;background:#90ee90"></div>
<div class="c" style="left:751px;top:285px;width:20px;background:#ffffff"></div>
<div class="c" style="left:771px;top:285px;width:20px;background:#ffffff"></div>
<div class="c" style="left:791px;top:285px;width:80px;background:#90ee90"></div>
<div class="c" style="left:871px;top:285px;width:140px;background:#ffffff"></div>
<div class="cb" style="left:5px;top:288px"></div>
<div class="t" style="left:27px;top:289px;transform:scaleX(0.93)">119.40.83.138</div>
<div class="t" style="left:124.5px;top:289px;transform:scaleX(0.95)">8080</div>
<div class="t" style="left:171px;width:100px;text-align:center;top:289px">Up</div>
<div class="t" style="left:274.5px;top:289px">GoogleBlocked</div>
<div class="t" style="left:374.5px;top:289px">Malaysia</div>
<div class="t" style="left:474.5px;top:289px;transform:scaleX(0.94)">5.178</div>
<div class="t" style="left:534.5px;top:289px;transform:scaleX(0.95)">Transparent</div>
<div class="t" style="left:635.5px;top:289px;transform:scaleX(1.03)">Https</div>
<div class="t" style="left:694.5px;top:289px">100</div>
<div class="t" style="left:754.5px;top:289px">1</div>
<div class="t" style="left:774.5px;top:289px">0</div>
<div class="t" style="left:794.5px;top:289px">NotBlacklist...</div>
<div class="t" style="left:874.5px;top:289px;transform:scaleX(0.96)">2022/01/18 00:13:30</div>
<div class="c" style="left:1px;top:304px;width:120px;background:#ffff00"></div>
<div class="c" style="left:121px;top:304px;width:50px;background:#ffff00"></div>
<div class="c" style="left:171px;top:304px;width:100px;background:#ffff00"></div>
<div class="c" style="left:271px;top:304px;width:100px;background:#ffff00"></div>
<div class="c" style="left:371px;top:304px;width:100px;background:#ffff00"></div>
<div class="c" style="left:471px;top:304px;width:60px;background:#ffff00"></div>
<div class="c" style="left:531px;top:304px;width:100px;background:#90ee90"></div>
<div class="c" style="left:631px;top:304px;width:60px;background:#ffff00"></div>
<div class="c" style="left:691px;top:304px;width:60px;background:#90ee90"></div>
<div class="c" style="left:751px;top:304px;width:20px;background:#ffffff"></div>
<div class="c" style="left:771px;top:304px;width:20px;background:#ffffff"></div>
<div class="c" style="left:791px;top:304px;width:80px;background:#90ee90"></div>
<div class="c" style="left:871px;top:304px;width:140px;background:#ffffff"></div>
<div class="cb" style="left:5px;top:307px"></div>
<div class="t" style="left:27px;top:308px;transform:scaleX(0.93)">94.23.91.209</div>
<div class="t" style="left:124.5px;top:308px;transform:scaleX(0.95)">80</div>
<div class="t" style="left:171px;width:100px;text-align:center;top:308px">Up</div>
<div class="t" style="left:274.5px;top:308px">GoogleBlocked</div>
<div class="t" style="left:374.5px;top:308px">France</div>
<div class="t" style="left:474.5px;top:308px;transform:scaleX(0.94)">17.062</div>
<div class="t" style="left:534.5px;top:308px">Elite</div>
<div class="t" style="left:635.5px;top:308px;transform:scaleX(1.05)">Http</div>
<div class="t" style="left:694.5px;top:308px">100</div>
<div class="t" style="left:754.5px;top:308px">1</div>
<div class="t" style="left:774.5px;top:308px">0</div>
<div class="t" style="left:794.5px;top:308px">NotBlacklist...</div>
<div class="t" style="left:874.5px;top:308px;transform:scaleX(0.96)">2022/01/18 00:13:33</div>
<div class="c" style="left:1px;top:323px;width:120px;background:#ffff00"></div>
<div class="c" style="left:121px;top:323px;width:50px;background:#ffff00"></div>
<div class="c" style="left:171px;top:323px;width:100px;background:#ffff00"></div>
<div class="c" style="left:271px;top:323px;width:100px;background:#ffff00"></div>
<div class="c" style="left:371px;top:323px;width:100px;background:#ffff00"></div>
<div class="c" style="left:471px;top:323px;width:60px;background:#90ee90"></div>
<div class="c" style="left:531px;top:323px;width:100px;background:#90ee90"></div>
<div class="c" style="left:631px;top:323px;width:60px;background:#90ee90"></div>
<div class="c" style="left:691px;top:323px;width:60px;background:#90ee90"></div>
<div class="c" style="left:751px;top:323px;width:20px;background:#ffffff"></div>
<div class="c" style="left:771px;top:323px;width:20px;background:#ffffff"></div>
<div class="c" style="left:791px;top:323px;width:80px;background:#90ee90"></div>
<div class="c" style="left:871px;top:323px;width:140px;background:#ffffff"></div>
<div class="cb" style="left:5px;top:326px"></div>
<div class="t" style="left:27px;top:327px;transform:scaleX(0.93)">103.73.194.2</div>
<div class="t" style="left:124.5px;top:327px;transform:scaleX(0.95)">80</div>
<div class="t" style="left:171px;width:100px;text-align:center;top:327px">Up</div>
<div class="t" style="left:274.5px;top:327px">GoogleBlocked</div>
<div class="t" style="left:374.5px;top:327px">India</div>
<div class="t" style="left:474.5px;top:327px;transform:scaleX(0.94)">1.629</div>
<div class="t" style="left:534.5px;top:327px">Elite</div>
<div class="t" style="left:635.5px;top:327px;transform:scaleX(1.03)">Https</div>
<div class="t" style="left:694.5px;top:327px">100</div>
<div class="t" style="left:754.5px;top:327px">1</div>
<div class="t" style="left:774.5px;top:327px">0</div>
<div class="t" style="left:794.5px;top:327px">NotBlacklist...</div>
<div class="t" style="left:874.5px;top:327px;transform:scaleX(0.96)">2022/01/18 00:13:34</div>
<div class="c" style="left:1px;top:342px;width:120px;background:#ffff00"></div>
<div class="c" style="left:121px;top:342px;width:50px;background:#ffff00"></div>
<div class="c" style="left:171px;top:342px;width:100px;background:#ffff00"></div>
<div class="c" style="left:271px;top:342px;width:100px;background:#ffff00"></div>
<div class="c" style="left:371px;top:342px;width:100px;background:#ffff00"></div>
<div class="c" style="left:471px;top:342px;width:60px;background:#90ee90"></div>
<div class="c" style="left:531px;top:342px;width:100px;background:#ffff00"></div>
<div class="c" style="left:631px;top:342px;width:60px;background:#90ee90"></div>
<div class="c" style="left:691px;top:342px;width:60px;background:#90ee90"></div>
<div class="c" style="left:751px;top:342px;width:20px;background:#ffffff"></div>
<div class="c" style="left:771px;top:342px;width:20px;background:#ffffff"></div>
<div class="c" style="left:791px;top:342px;width:80px;background:#90ee90"></div>
<div class="c" style="left:871px;top:342px;width:140px;background:#ffffff"></div>
<div class="cb" style="left:5px;top:345px"></div>
<div class="t" style="left:27px;top:346px;transform:scaleX(0.93)">197.246.202.81</div>
<div class="t" style="left:124.5px;top:346px;transform:scaleX(0.95)">8080</div>
<div class="t" style="left:171px;width:100px;text-align:center;top:346px">Up</div>
<div class="t" style="left:274.5px;top:346px">GoogleBlocked</div>
<div class="t" style="left:374.5px;top:346px">Egypt</div>
<div class="t" style="left:474.5px;top:346px;transform:scaleX(0.94)">3.388</div>
<div class="t" style="left:534.5px;top:346px;transform:scaleX(1.04)">Anonymous</div>
<div class="t" style="left:635.5px;top:346px;transform:scaleX(1.03)">Https</div>
<div class="t" style="left:694.5px;top:346px">100</div>
<div class="t" style="left:754.5px;top:346px">1</div>
<div class="t" style="left:774.5px;top:346px">0</div>
<div class="t" style="left:794.5px;top:346px">NotBlacklist...</div>
<div class="t" style="left:874.5px;top:346px;transform:scaleX(0.96)">2022/01/18 00:13:37</div>
<div class="c" style="left:1px;top:361px;width:120px;background:#ffff00"></div>
<div class="c" style="left:121px;top:361px;width:50px;background:#ffff00"></div>
<div class="c" style="left:171px;top:361px;width:100px;background:#ffff00"></div>
<div class="c" style="left:271px;top:361px;width:100px;background:#ffff00"></div>
<div class="c" style="left:371px;top:361px;width:100px;background:#ffff00"></div>
<div class="c" style="left:471px;top:361px;width:60px;background:#90ee90"></div>
<div class="c" style="left:531px;top:361px;width:100px;background:#90ee90"></div>
<div class="c" style="left:631px;top:361px;width:60px;background:#ffff00"></div>
<div class="c" style="left:691px;top:361px;width:60px;background:#90ee90"></div>
<div class="c" style="left:751px;top:361px;width:20px;background:#ffffff"></div>
<div class="c" style="left:771px;top:361px;width:20px;background:#ffffff"></div>
<div class="c" style="left:791px;top:361px;width:80px;background:#90ee90"></div>
<div class="c" style="left:871px;top:361px;width:140px;background:#ffffff"></div>
<div class="cb" style="left:5px;top:364px"></div>
<div class="t" style="left:27px;top:365px;transform:scaleX(0.93)">139.180.183.41</div>
<div class="t" style="left:124.5px;top:365px;transform:scaleX(0.95)">80</div>
<div class="t" style="left:171px;width:100px;text-align:center;top:365px">Up</div>
<div class="t" style="left:274.5px;top:365px">GoogleBlocked</div>
<div class="t" style="left:374.5px;top:365px">Singapore</div>
<div class="t" style="left:474.5px;top:365px;transform:scaleX(0.94)">13.177</div>
<div class="t" style="left:534.5px;top:365px">Elite</div>
<div class="t" style="left:635.5px;top:365px;transform:scaleX(1.05)">Http</div>
<div class="t" style="left:694.5px;top:365px">100</div>
<div class="t" style="left:754.5px;top:365px">1</div>
<div class="t" style="left:774.5px;top:365px">0</div>
<div class="t" style="left:794.5px;top:365px">NotBlacklist...</div>
<div class="t" style="left:874.5px;top:365px;transform:scaleX(0.96)">2022/01/18 00:13:39</div>
<div class="c" style="left:1px;top:380px;width:120px;background:#ffff00"></div>
<div class="c" style="left:121px;top:380px;width:50px;background:#ffff00"></div>
<div class="c" style="left:171px;top:380px;width:100px;background:#ffff00"></div>
<div class="c" style="left:271px;top:380px;width:100px;background:#ffff00"></div>
<div class="c" style="left:371px;top:380px;width:100px;background:#ffff00"></div>
<div class="c" style="left:471px;top:380px;width:60px;background:#90ee90"></div>
<div class="c" style="left:531px;top:380px;width:100px;background:#ffff00"></div>
<div class="c" style="left:631px;top:380px;width:60px;background:#90ee90"></div>
<div class="c" style="left:691px;top:380px;width:60px;background:#90ee90"></div>
<div class="c" style="left:751px;top:380px;width:20px;background:#ffffff"></div>
<div class="c" style="left:771px;top:380px;width:20px;background:#ffffff"></div>
<div class="c" style="left:791px;top:380px;width:80px;background:#90ee90"></div>
<div class="c" style="left:871px;top:380px;width:140px;background:#ffffff"></div>
<div class="cb" style="left:5px;top:383px"></div>
<div class="t" style="left:27px;top:384px;transform:scaleX(0.93)">177.185.32.1</div>
<div class="t" style="left:124.5px;top:384px;transform:scaleX(0.95)">8080</div>
<div class="t" style="left:171px;width:100px;text-align:center;top:384px">Up</div>
<div class="t" style="left:274.5px;top:384px">GoogleBlocked</div>
<div class="t" style="left:374.5px;top:384px">Brazil</div>
<div class="t" style="left:474.5px;top:384px;transform:scaleX(0.94)">3.862</div>
<div class="t" style="left:534.5px;top:384px;transform:scaleX(1.04)">Anonymous</div>
<div class="t" style="left:635.5px;top:384px;transform:scaleX(1.03)">Https</div>
<div class="t" style="left:694.5px;top:384px">100</div>
<div class="t" style="left:754.5px;top:384px">1</div>
<div class="t" style="left:774.5px;top:384px">0</div>
<div class="t" style="left:794.5px;top:384px">NotBlacklist...</div>
<div class="t" style="left:874.5px;top:384px;transform:scaleX(0.96)">2022/01/18 00:13:40</div>
<div class="c" style="left:1px;top:399px;width:120px;background:#ffff00"></div>
<div class="c" style="left:121px;top:399px;width:50px;background:#ffff00"></div>
<div class="c" style="left:171px;top:399px;width:100px;background:#ffff00"></div>
<div class="c" style="left:271px;top:399px;width:100px;background:#ffff00"></div>
<div class="c" style="left:371px;top:399px;width:100px;background:#ffff00"></div>
<div class="c" style="left:471px;top:399px;width:60px;background:#90ee90"></div>
<div class="c" style="left:531px;top:399px;width:100px;background:#ffff00"></div>
<div class="c" style="left:631px;top:399px;width:60px;background:#90ee90"></div>
<div class="c" style="left:691px;top:399px;width:60px;background:#90ee90"></div>
<div class="c" style="left:751px;top:399px;width:20px;background:#ffffff"></div>
<div class="c" style="left:771px;top:399px;width:20px;background:#ffffff"></div>
<div class="c" style="left:791px;top:399px;width:80px;background:#90ee90"></div>
<div class="c" style="left:871px;top:399px;width:140px;background:#ffffff"></div>
<div class="cb" style="left:5px;top:402px"></div>
<div class="t" style="left:27px;top:403px;transform:scaleX(0.93)">118.99.124.244</div>
<div class="t" style="left:124.5px;top:403px;transform:scaleX(0.95)">8080</div>
<div class="t" style="left:171px;width:100px;text-align:center;top:403px">Up</div>
<div class="t" style="left:274.5px;top:403px">GoogleBlocked</div>
<div class="t" style="left:374.5px;top:403px">Indonesia</div>
<div class="t" style="left:474.5px;top:403px;transform:scaleX(0.94)">2.525</div>
<div class="t" style="left:534.5px;top:403px;transform:scaleX(1.04)">Anonymous</div>
<div class="t" style="left:635.5px;top:403px;transform:scaleX(1.03)">Https</div>
<div class="t" style="left:694.5px;top:403px">100</div>
<div class="t" style="left:754.5px;top:403px">1</div>
<div class="t" style="left:774.5px;top:403px">0</div>
<div class="t" style="left:794.5px;top:403px">NotBlacklist...</div>
<div class="t" style="left:874.5px;top:403px;transform:scaleX(0.96)">2022/01/18 00:13:48</div>
<div class="c" style="left:1px;top:418px;width:120px;background:#ffff00"></div>
<div class="c" style="left:121px;top:418px;width:50px;background:#ffff00"></div>
<div class="c" style="left:171px;top:418px;width:100px;background:#ffff00"></div>
<div class="c" style="left:271px;top:418px;width:100px;background:#ffff00"></div>
<div class="c" style="left:371px;top:418px;width:100px;background:#ffff00"></div>
<div class="c" style="left:471px;top:418px;width:60px;background:#90ee90"></div>
<div class="c" style="left:531px;top:418px;width:100px;background:#90ee90"></div>
<div class="c" style="left:631px;top:418px;width:60px;background:#90ee90"></div>
<div class="c" style="left:691px;top:418px;width:60px;background:#90ee90"></div>
<div class="c" style="left:751px;top:418px;width:20px;background:#ffffff"></div>
<div class="c" style="left:771px;top:418px;width:20px;background:#ffffff"></div>
<div class="c" style="left:791px;top:418px;width:80px;background:#90ee90"></div>
<div class="c" style="left:871px;top:418px;width:140px;background:#ffffff"></div>
<div class="cb" style="left:5px;top:421px"></div>
<div class="t" style="left:27px;top:422px;transform:scaleX(0.93)">194.233.73.109</div>
<div class="t" style="left:124.5px;top:422px;transform:scaleX(0.95)">443</div>
<div class="t" style="left:171px;width:100px;text-align:center;top:422px">Up</div>
<div class="t" style="left:274.5px;top:422px">GoogleBlocked</div>
<div class="t" style="left:374.5px;top:422px">Singapore</div>
<div class="t" style="left:474.5px;top:422px;transform:scaleX(0.94)">2.152</div>
<div class="t" style="left:534.5px;top:422px">Elite</div>
<div class="t" style="left:635.5px;top:422px;transform:scaleX(1.03)">Https</div>
<div class="t" style="left:694.5px;top:422px">100</div>
<div class="t" style="left:754.5px;top:422px">1</div>
<div class="t" style="left:774.5px;top:422px">0</div>
<div class="t" style="left:794.5px;top:422px">NotBlacklist...</div>
<div class="t" style="left:874.5px;top:422px;transform:scaleX(0.96)">2022/01/18 00:13:51</div>
<div class="c" style="left:1px;top:437px;width:120px;background:#ffff00"></div>
<div class="c" style="left:121px;top:437px;width:50px;background:#ffff00"></div>
<div class="c" style="left:171px;top:437px;width:100px;background:#ffff00"></div>
<div class="c" style="left:271px;top:437px;width:100px;background:#ffff00"></div>
<div class="c" style="left:371px;top:437px;width:100px;background:#ffff00"></div>
<div class="c" style="left:471px;top:437px;width:60px;background:#90ee90"></div>
<div class="c" style="left:531px;top:437px;width:100px;background:#ffff00"></div>
<div class="c" style="left:631px;top:437px;width:60px;background:#ffff00"></div>
<div class="c" style="left:691px;top:437px;width:60px;background:#90ee90"></div>
<div class="c" style="left:751px;top:437px;width:20px;background:#ffffff"></div>
<div class="c" style="left:771px;top:437px;width:20px;background:#ffffff"></div>
<div class="c" style="left:791px;top:437px;width:80px;background:#90ee90"></div>
<div class="c" style="left:871px;top:437px;width:140px;background:#ffffff"></div>
<div class="cb" style="left:5px;top:440px"></div>
<div class="t" style="left:27px;top:441px;transform:scaleX(0.93)">5.39.17.96</div>
<div class="t" style="left:124.5px;top:441px;transform:scaleX(0.95)">80</div>
<div class="t" style="left:171px;width:100px;text-align:center;top:441px">Up</div>
<div class="t" style="left:274.5px;top:441px">GoogleBlocked</div>
<div class="t" style="left:374.5px;top:441px">France</div>
<div class="t" style="left:474.5px;top:441px;transform:scaleX(0.94)">5.48</div>
<div class="t" style="left:534.5px;top:441px;transform:scaleX(1.04)">Anonymous</div>
<div class="t" style="left:635.5px;top:441px;transform:scaleX(1.05)">Http</div>
<div class="t" style="left:694.5px;top:441px">100</div>
<div class="t" style="left:754.5px;top:441px">1</div>
<div class="t" style="left:774.5px;top:441px">0</div>
<div class="t" style="left:794.5px;top:441px">NotBlacklist...</div>
<div class="t" style="left:874.5px;top:441px;transform:scaleX(0.96)">2022/01/18 00:13:55</div>
<div class="c" style="left:1px;top:456px;width:120px;background:#ffff00"></div>
<div class="c" style="left:121px;top:456px;width:50px;background:#ffff00"></div>
<div class="c" style="left:171px;top:456px;width:100px;background:#ffff00"></div>
<div class="c" style="left:271px;top:456px;width:100px;background:#ffff00"></div>
<div class="c" style="left:371px;top:456px;width:100px;background:#ffff00"></div>
<div class="c" style="left:471px;top:456px;width:60px;background:#90ee90"></div>
<div class="c" style="left:531px;top:456px;width:100px;background:#ff6347"></div>
<div class="c" style="left:631px;top:456px;width:60px;background:#90ee90"></div>
<div class="c" style="left:691px;top:456px;width:60px;background:#90ee90"></div>
<div class="c" style="left:751px;top:456px;width:20px;background:#ffffff"></div>
<div class="c" style="left:771px;top:456px;width:20px;background:#ffffff"></div>
<div class="c" style="left:791px;top:456px;width:80px;background:#90ee90"></div>
<div class="c" style="left:871px;top:456px;width:140px;background:#ffffff"></div>
<div class="cb" style="left:5px;top:459px"></div>
<div class="t" style="left:27px;top:460px;transform:scaleX(0.93)">202.152.51.44</div>
<div class="t" style="left:124.5px;top:460px;transform:scaleX(0.95)">8080</div>
<div class="t" style="left:171px;width:100px;text-align:center;top:460px">Up</div>
<div class="t" style="left:274.5px;top:460px">GoogleBlocked</div>
<div class="t" style="left:374.5px;top:460px">Indonesia</div>
<div class="t" style="left:474.5px;top:460px;transform:scaleX(0.94)">2.369</div>
<div class="t" style="left:534.5px;top:460px;transform:scaleX(0.95)">Transparent</div>
<div class="t" style="left:635.5px;top:460px;transform:scaleX(1.03)">Https</div>
<div class="t" style="left:694.5px;top:460px">100</div>
<div class="t" style="left:754.5px;top:460px">1</div>
<div class="t" style="left:774.5px;top:460px">0</div>
<div class="t" style="left:794.5px;top:460px">NotBlacklist...</div>
<div class="t" style="left:874.5px;top:460px;transform:scaleX(0.96)">2022/01/18 00:13:56</div>
<div class="c" style="left:1px;top:475px;width:120px;background:#ffff00"></div>
<div class="c" style="left:121px;top:475px;width:50px;background:#ffff00"></div>
<div class="c" style="left:171px;top:475px;width:100px;background:#ffff00"></div>
<div class="c" style="left:271px;top:475px;width:100px;background:#ffff00"></div>
<div class="c" style="left:371px;top:475px;width:100px;background:#ffff00"></div>
<div class="c" style="left:471px;top:475px;width:60px;background:#ff6347"></div>
<div class="c" style="left:531px;top:475px;width:100px;background:#90ee90"></div>
<div class="c" style="left:631px;top:475px;width:60px;background:#90ee90"></div>
<div class="c" style="left:691px;top:475px;width:60px;background:#90ee90"></div>
<div class="c" style="left:751px;top:475px;width:20px;background:#ffffff"></div>
<div class="c" style="left:771px;top:475px;width:20px;background:#ffffff"></div>
<div class="c" style="left:791px;top:475px;width:80px;background:#90ee90"></div>
<div class="c" style="left:871px;top:475px;width:140px;background:#ffffff"></div>
<div class="cb" style="left:5px;top:478px"></div>
<div class="t" style="left:27px;top:479px;transform:scaleX(0.93)">177.91.111.253</div>
<div class="t" style="left:124.5px;top:479px;transform:scaleX(0.95)">8080</div>
<div class="t" style="left:171px;width:100px;text-align:center;top:479px">Up</div>
<div class="t" style="left:274.5px;top:479px">GoogleBlocked</div>
<div class="t" style="left:374.5px;top:479px">Brazil</div>
<div class="t" style="left:474.5px;top:479px;transform:scaleX(0.94)">23.615</div>
<div class="t" style="left:534.5px;top:479px">Elite</div>
<div class="t" style="left:635.5px;top:479px;transform:scaleX(1.03)">Https</div>
<div class="t" style="left:694.5px;top:479px">100</div>
<div class="t" style="left:754.5px;top:479px">1</div>
<div class="t" style="left:774.5px;top:479px">0</div>
<div class="t" style="left:794.5px;top:479px">NotBlacklist...</div>
<div class="t" style="left:874.5px;top:479px;transform:scaleX(0.96)">2022/01/18 00:13:58</div>
<div class="c" style="left:1px;top:494px;width:120px;background:#ffff00"></div>
<div class="c" style="left:121px;top:494px;width:50px;background:#ffff00"></div>
<div class="c" style="left:171px;top:494px;width:100px;background:#ffff00"></div>
<div class="c" style="left:271px;top:494px;width:100px;background:#ffff00"></div>
<div class="c" style="left:371px;top:494px;width:100px;background:#ffff00"></div>
<div class="c" style="left:471px;top:494px;width:60px;background:#90ee90"></div>
<div class="c" style="left:531px;top:494px;width:100px;background:#ff6347"></div>
<div class="c" style="left:631px;top:494px;width:60px;background:#ffff00"></div>
<div class="c" style="left:691px;top:494px;width:60px;background:#90ee90"></div>
<div class="c" style="left:751px;top:494px;width:20px;background:#ffffff"></div>
<div class="c" style="left:771px;top:494px;width:20px;background:#ffffff"></div>
<div class="c" style="left:791px;top:494px;width:80px;background:#90ee90"></div>
<div class="c" style="left:871px;top:494px;width:140px;background:#ffffff"></div>
<div class="cb" style="left:5px;top:497px"></div>
<div class="t" style="left:27px;top:498px;transform:scaleX(0.93)">103.155.54.26</div>
<div class="t" style="left:124.5px;top:498px;transform:scaleX(0.95)">8080</div>
<div class="t" style="left:171px;width:100px;text-align:center;top:498px">Up</div>
<div class="t" style="left:274.5px;top:498px">GoogleBlocked</div>
<div class="t" style="left:374.5px;top:498px">Brazil</div>
<div class="t" style="left:474.5px;top:498px;transform:scaleX(0.94)">2.100</div>
<div class="t" style="left:534.5px;top:498px;transform:scaleX(0.95)">Transparent</div>
<div class="t" style="left:635.5px;top:498px;transform:scaleX(1.05)">Http</div>
<div class="t" style="left:694.5px;top:498px">100</div>
<div class="t" style="left:754.5px;top:498px">1</div>
<div class="t" style="left:774.5px;top:498px">0</div>
<div class="t" style="left:794.5px;top:498px">NotBlacklist...</div>
<div class="t" style="left:874.5px;top:498px;transform:scaleX(0.96)">2022/01/18 00:14:01</div>
</div>
<div class="a" style="left:1215px;top:129px;width:18px;height:524px;background:#f0f0f0"></div>
<div class="a" style="left:1215px;top:164px;width:15px;height:91px;background:#cdcdcd"></div>
<svg class="a" style="left:1215px;top:129px" width="17" height="17"><path d="M4 11.5 L7.5 8 L11 11.5" fill="none" stroke="#606060" stroke-width="2"/></svg>
<svg class="a" style="left:1215px;top:636px" width="17" height="17"><path d="M4 7 L7.5 10.5 L11 7" fill="none" stroke="#606060" stroke-width="2"/></svg>
<div class="t" style="left:11px;top:664px;transform:scaleX(0.975)">Total:  140  Not Tested:  0  Up:  140 (6 of them pass Google)  Down:  0  Elite:  58  Anon.:  39  Trans.:  43  Remaining:  393.33 Min</div>
<div class="a" style="left:1116px;top:660px;width:99px;height:20px;background:#87ceeb"></div>
<div class="t" style="left:1121px;top:664px;color:#222;transform:scaleX(0.96)">Recalculate Stats</div>
<div class="a" style="left:176px;top:175px;width:106px;height:48px;border:1px solid #ccc;background:#f0f0f0"></div>
<div class="a" style="left:177px;top:177px;width:103px;height:21px;background:#b3d7f3"></div>
<div class="t" style="left:209px;top:183px;color:#333;transform:scaleX(0.88)">TICK</div>
<div class="t" style="left:209px;top:205px;color:#333;transform:scaleX(0.88)">COPY</div>
<svg class="a" style="left:262px;top:184px" width="7" height="5"><path d="M0.5 0.5 L6.5 0.5 L3.5 3.8 Z" fill="#222"/></svg>
<svg class="a" style="left:262px;top:206px" width="7" height="5"><path d="M0.5 0.5 L6.5 0.5 L3.5 3.8 Z" fill="#222"/></svg>
<div class="a" style="left:287px;top:182px;width:171px;height:449px;background:rgba(0,0,0,0.42);filter:blur(1.3px)"></div>
<div class="a" style="left:281px;top:177px;width:175px;height:452px;background:#fff">
<div class="mi" style="top:8px">ALL</div>
<div class="mi" style="top:30px">NONE</div>
<div class="mi" style="top:52px">TOGGLE</div>
<div class="mi" style="top:74px">TESTED</div>
<div class="mi" style="top:96px">UNTESTED</div>
<div class="ms" style="top:115px"></div>
<div class="mi" style="top:124px">UP</div>
<div class="mi" style="top:146px">DOWN</div>
<div class="ms" style="top:165px"></div>
<div class="mi" style="top:174px">GOOGLE PASSED</div>
<div class="mi" style="top:196px">GOOGLE BLOCKED</div>
<div class="ms" style="top:215px"></div>
<div class="mi" style="top:224px">ELITE</div>
<div class="mi" style="top:246px">ANONYMOUS</div>
<div class="mi" style="top:268px">TRANSPARENT</div>
<div class="ms" style="top:287px"></div>
<div class="mi" style="top:296px">HTTP</div>
<div class="mi" style="top:318px">HTTPS</div>
<div class="mi" style="top:340px">SOCKS4</div>
<div class="mi" style="top:362px">SOCKS5</div>
<div class="ms" style="top:381px"></div>
<div class="mi" style="top:390px">SPEED HIGHER</div>
<div class="mi" style="top:412px">SPEED LOWER</div>
<div class="mi" style="top:434px">UPTIME LOWER</div>
</div>
</body></html>
